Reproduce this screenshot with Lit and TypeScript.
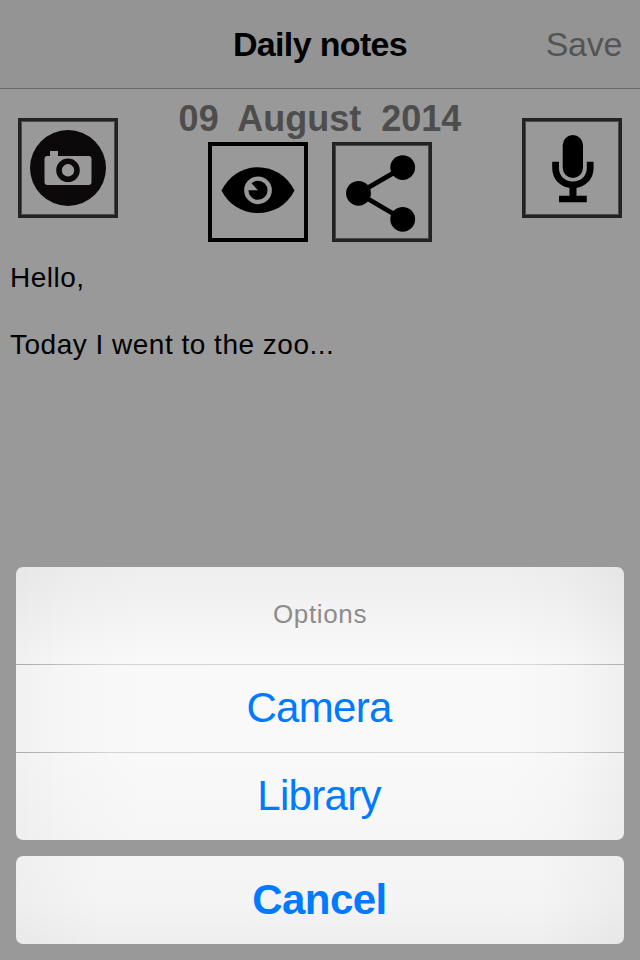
import { LitElement, html, css, svg } from "lit";
import { customElement } from "lit/decorators.js";

const cameraIcon = svg`
  <circle cx="50" cy="50" r="38" fill="#0c090a"/>
  <path fill="#999" d="M32 38V33H40V38H70.500Q73.500 38 73.500 41V64Q73.500 67 70.500 67H29.500Q26.500 67 26.500 64V41Q26.500 38 29.500 38Z"/>
  <circle cx="50" cy="52.300" r="9" fill="none" stroke="#0c090a" stroke-width="5.600"/>`;

const eyeIcon = svg`
  <path d="M13.500 48.500C21 33.500 35 25.200 50 25.200S79 33.500 86.500 48.500C79 63.500 65 71 50 71S21 63.500 13.500 48.500Z"/>
  <circle cx="50" cy="48.300" r="11.700" fill="none" stroke="#999" stroke-width="4.300"/>
  <path fill="#999" d="M38.500 48.200H50L43 40.800L38.500 43.500Z"/>`;

const shareIcon = svg`
  <path d="M70.700 25.600L26.500 51.200L70.700 77.200" fill="none" stroke="#000" stroke-width="4.800"/>
  <circle cx="70.700" cy="25.600" r="12.400"/>
  <circle cx="26.500" cy="51.300" r="12.400"/>
  <circle cx="70.700" cy="77.300" r="12.400"/>`;

const micIcon = svg`
  <rect x="40.700" y="17" width="20.300" height="43" rx="10.150"/>
  <path d="M33.600 43.700V50C33.600 60 41 66.800 50.800 66.800S68.200 60 68.200 50V43.700" fill="none" stroke="#000" stroke-width="6.800"/>
  <path d="M47.500 68H54.500V77.700H64.800V84.200H37V77.700H47.500Z"/>`;

@customElement("app-root")
export class AppRoot extends LitElement {
  static styles = css`
    :host {
      display: flex;
      flex-direction: column;
      box-sizing: border-box;
      width: 640px;
      height: 960px;
      overflow: hidden;
      background: #999;
      color: #000;
      font-family: "Liberation Sans", Arial, sans-serif;
    }
    button {
      border: 0;
      padding: 0;
      margin: 0;
      background: none;
      font: inherit;
      color: inherit;
      display: block;
    }
    .nav {
      box-sizing: border-box;
      height: 89px;
      flex: none;
      display: grid;
      grid-template-columns: 120px 1fr 120px;
      align-items: center;
      border-bottom: 1px solid #686868;
      background: #949494;
      font-size: 34px;
      line-height: 40px;
    }
    .title {
      grid-column: 2;
      margin: 0;
      text-align: center;
      font-size: 34px;
      font-weight: 700;
      letter-spacing: -0.65px;
    }
    .save {
      justify-self: end;
      padding-right: 18px;
      letter-spacing: -0.3px;
      color: #545454;
    }
    .tools {
      flex: none;
      height: 153px;
      display: grid;
      grid-template-columns: 100px 1fr 100px;
      padding: 0 18px;
    }
    .side {
      margin-top: 29px;
    }
    .middle {
      display: flex;
      flex-direction: column;
      align-items: center;
    }
    .date {
      height: 53px;
      line-height: 60px;
      font-size: 36px;
      font-weight: 700;
      color: #4d4d4d;
      white-space: pre;
    }
    .pair {
      display: flex;
      gap: 24px;
    }
    .tool {
      box-sizing: border-box;
      width: 100px;
      height: 100px;
      border: 3px solid #222;
      box-shadow: inset 0 0 0 1px #4a4a4a;
    }
    .tool.dark {
      border: 4px solid #000;
      box-shadow: none;
    }
    .tool svg {
      display: block;
      width: 100px;
      height: 100px;
      margin: -3px;
    }
    .tool.dark svg {
      margin: -4px;
    }
    .note {
      flex: 1;
      padding: 19px 10px 0;
      font-size: 28px;
      line-height: 33.500px;
      letter-spacing: 0.5px;
      white-space: pre-line;
    }
    .sheet {
      flex: none;
      display: flex;
      flex-direction: column;
      gap: 16px;
      padding: 0 16px 16px;
    }
    .group {
      border-radius: 7px;
      overflow: hidden;
      text-align: center;
      background:
        linear-gradient(90deg, rgba(0, 0, 0, 0.03), rgba(0, 0, 0, 0.01) 9%, transparent 22%, transparent 80%, rgba(0, 0, 0, 0.01) 91%, rgba(0, 0, 0, 0.04)),
        linear-gradient(#eeeeee, #f9f9f9 35%, #f9f9f9 70%, #f6f6f6);
    }
    .group.last {
      background:
        linear-gradient(90deg, rgba(0, 0, 0, 0.025), transparent 14%, transparent 86%, rgba(0, 0, 0, 0.03)),
        linear-gradient(#f5f5f5, #f4f4f4 50%, #eeeeee);
    }
    .heading {
      height: 97px;
      line-height: 95px;
      font-size: 26px;
      letter-spacing: 0.65px;
      color: #8c8c8c;
    }
    .rule {
      height: 1px;
      background: linear-gradient(90deg, #aaa, #d3d3d6 15%, #d8d8da 85%, #b0b0b2);
    }
    .action {
      box-sizing: border-box;
      width: 100%;
      height: 87px;
      padding: 0 2px 2px 0;
      line-height: 85px;
      font-size: 42px;
      letter-spacing: -0.7px;
      color: #007aff;
    }
    .last .action {
      height: 88px;
      padding: 0 1px 0 0;
      line-height: 88px;
      letter-spacing: -0.55px;
      font-weight: 700;
    }
  `;

  private tool(label: string, art: unknown, extra = "") {
    return html`<button class="tool ${extra}" aria-label=${label}>
      <svg viewBox="0 0 100 100">${art}</svg>
    </button>`;
  }

  render() {
    return html`
      <header class="nav">
        <h1 class="title">Daily notes</h1>
        <button class="save">Save</button>
      </header>
      <section class="tools">
        <div class="side">${this.tool("Photo", cameraIcon)}</div>
        <div class="middle">
          <div class="date">${"09  August  2014"}</div>
          <div class="pair">
            ${this.tool("View", eyeIcon, "dark")}${this.tool("Share", shareIcon)}
          </div>
        </div>
        <div class="side">${this.tool("Record", micIcon)}</div>
      </section>
      <main class="note">${"Hello,\n\nToday I went to the zoo..."}</main>
      <section class="sheet">
        <div class="group">
          <div class="heading">Options</div>
          <div class="rule"></div>
          <button class="action">Camera</button>
          <div class="rule"></div>
          <button class="action">Library</button>
        </div>
        <div class="group last">
          <button class="action">Cancel</button>
        </div>
      </section>
    `;
  }
}
